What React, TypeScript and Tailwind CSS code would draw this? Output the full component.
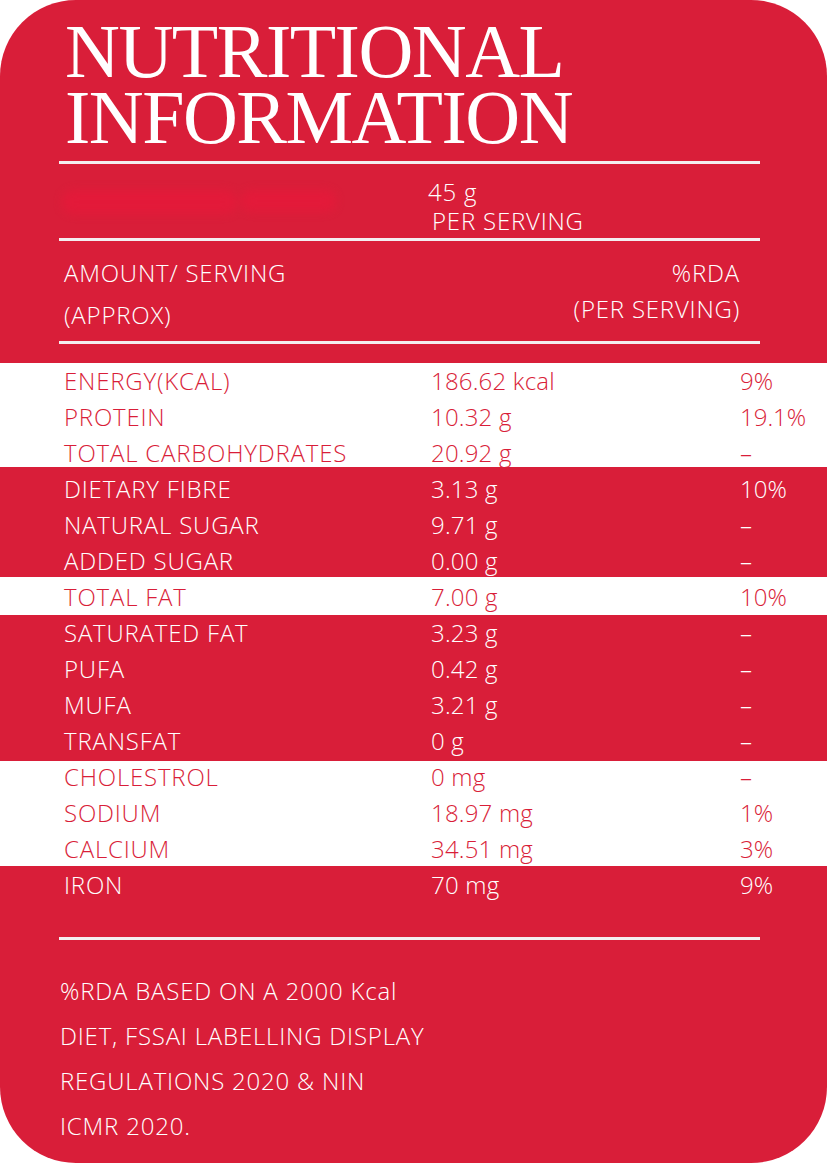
import React from "react";

interface Row {
  name: string;
  amount: string;
  rda: string;
}

interface Band {
  light: boolean;
  height: string;
  shift: string;
  rows: Row[];
}

const bands: Band[] = [
  {
    light: true,
    height: "h-[104px]",
    shift: "mt-0",
    rows: [
      { name: "ENERGY(KCAL)", amount: "186.62 kcal", rda: "9%" },
      { name: "PROTEIN", amount: "10.32 g", rda: "19.1%" },
      { name: "TOTAL CARBOHYDRATES", amount: "20.92 g", rda: "–" },
    ],
  },
  {
    light: false,
    height: "h-[110px]",
    shift: "mt-[4px]",
    rows: [
      { name: "DIETARY FIBRE", amount: "3.13 g", rda: "10%" },
      { name: "NATURAL SUGAR", amount: "9.71 g", rda: "–" },
      { name: "ADDED SUGAR", amount: "0.00 g", rda: "–" },
    ],
  },
  {
    light: true,
    height: "h-[38px]",
    shift: "mt-[2px]",
    rows: [{ name: "TOTAL FAT", amount: "7.00 g", rda: "10%" }],
  },
  {
    light: false,
    height: "h-[146px]",
    shift: "mt-0",
    rows: [
      { name: "SATURATED FAT", amount: "3.23 g", rda: "–" },
      { name: "PUFA", amount: "0.42 g", rda: "–" },
      { name: "MUFA", amount: "3.21 g", rda: "–" },
      { name: "TRANSFAT", amount: "0 g", rda: "–" },
    ],
  },
  {
    light: true,
    height: "h-[105px]",
    shift: "mt-[-2px]",
    rows: [
      { name: "CHOLESTROL", amount: "0 mg", rda: "–" },
      { name: "SODIUM", amount: "18.97 mg", rda: "1%" },
      { name: "CALCIUM", amount: "34.51 mg", rda: "3%" },
    ],
  },
  {
    light: false,
    height: "h-[71px]",
    shift: "mt-[1px]",
    rows: [{ name: "IRON", amount: "70 mg", rda: "9%" }],
  },
];

function Rule() {
  return <div className="ml-[59px] w-[701px] h-[3px] bg-[#f4eef0]" />;
}

function NutrientBand({ band }: { band: Band }) {
  return (
    <div className={`flex flex-col ${band.height} ${band.light ? "bg-white text-[#d91e39]" : "bg-[#d91e39] text-white"}`}>
      <div className={band.shift}>
        {band.rows.map((row, i) => (
          <div key={`row-${i}`} className="grid grid-cols-[367px_309px_1fr] pl-[64px] h-[36px] leading-[36px]">
            <span>{row.name}</span>
            <span className="tracking-[0.2px]">{row.amount}</span>
            <span className="tracking-normal">{row.rda}</span>
          </div>
        ))}
      </div>
    </div>
  );
}

export default function App() {
  return (
    <div className="bg-white w-[827px] h-[1163px]">
      <div
        className="w-[827px] h-[1163px] rounded-[76px] overflow-hidden bg-[#d91e39] text-white text-[24px] font-light tracking-[0.8px]"
        style={{ fontFamily: '"Open Sans", "Liberation Sans", sans-serif' }}
      >
        <h1
          className="pt-[18px] pl-[65px] text-[76px] leading-[66px] tracking-[-1.5px] font-normal"
          style={{ fontFamily: '"Liberation Serif", serif' }}
        >
          <div>NUTRITIONAL</div>
          <div>INFORMATION</div>
        </h1>

        <div className="mt-[11px]">
          <Rule />
        </div>

        <div className="flex pt-[13px] pb-[3px] leading-[29px]">
          <div className="w-[428px] pl-[62px] pt-[13px]">
            <div className="flex gap-[4px] blur-[4px] opacity-80">
              <span className="w-[175px] h-[24px] rounded-full bg-[#e6193a]" />
              <span className="w-[95px] h-[22px] rounded-full bg-[#e6193a]" />
            </div>
          </div>
          <div>
            <div>45 g</div>
            <div className="pl-[4px]">PER SERVING</div>
          </div>
        </div>

        <Rule />

        <div className="flex justify-between pl-[64px] pr-[87px] pt-[11px] pb-[5px]">
          <div className="leading-[42px]">
            <div>AMOUNT/ SERVING</div>
            <div>(APPROX)</div>
          </div>
          <div className="leading-[36px] text-right pt-[3px]">
            <div>%RDA</div>
            <div>(PER SERVING)</div>
          </div>
        </div>

        <Rule />

        <div className="mt-[19px]">
          {bands.map((band, i) => (
            <NutrientBand band={band} key={`band-${i}`} />
          ))}
        </div>

        <Rule />

        <div className="pl-[60px] pt-[28px] leading-[45px]">
          <div>%RDA BASED ON A 2000 Kcal</div>
          <div>DIET, FSSAI LABELLING DISPLAY</div>
          <div>REGULATIONS 2020 &amp; NIN</div>
          <div>ICMR 2020.</div>
        </div>
      </div>
    </div>
  );
}
